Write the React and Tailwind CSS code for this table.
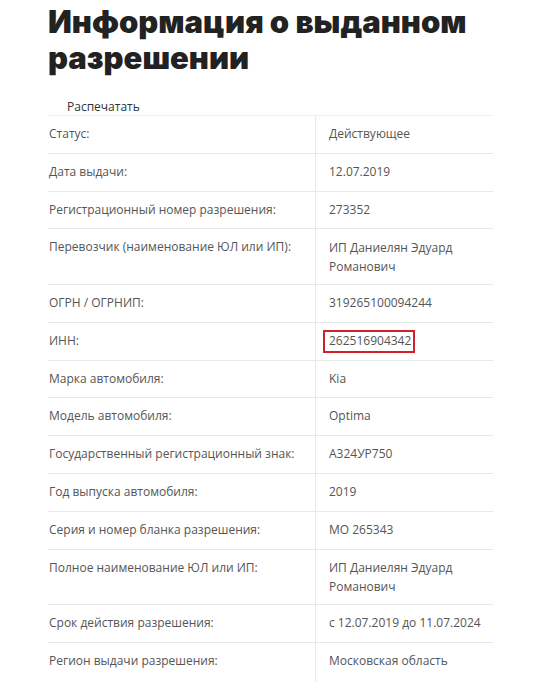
import React from "react";

const rows = [
  ["Статус:", "Действующее"],
  ["Дата выдачи:", "12.07.2019"],
  ["Регистрационный номер разрешения:", "273352"],
  ["Перевозчик (наименование ЮЛ или ИП):", "ИП Даниелян Эдуард Романович", false, true],
  ["ОГРН / ОГРНИП:", "319265100094244"],
  ["ИНН:", "262516904342", true],
  ["Марка автомобиля:", "Kia"],
  ["Модель автомобиля:", "Optima"],
  ["Государственный регистрационный знак:", "А324УР750"],
  ["Год выпуска автомобиля:", "2019"],
  ["Серия и номер бланка разрешения:", "МО 265343"],
  ["Полное наименование ЮЛ или ИП:", "ИП Даниелян Эдуард Романович", false, true],
  ["Срок действия разрешения:", "с 12.07.2019 до 11.07.2024"],
  ["Регион выдачи разрешения:", "Московская область"],
];

export default function App() {
  return (
    <div className="w-[540px] h-[682px] overflow-hidden bg-white">
      <div className="pl-[48px] pr-[47px]">
        <h1
          className="pt-[4px] text-[31px] leading-[36px] font-black text-[#222222]"
          style={{ fontFamily: "Inter, 'Noto Sans', sans-serif" }}
        >
          Информация о выданном
          <br />
          разрешении
        </h1>
        <div
          className="mt-[23px] pl-[19px] text-[12px] leading-[16px] text-[#333333]"
          style={{ fontFamily: "'Open Sans', sans-serif" }}
        >
          Распечатать
        </div>
        <div
          className="border-t border-[#eeeeee] text-[12px] text-[#555555]"
          style={{ fontFamily: "'Open Sans', sans-serif" }}
        >
          {rows.map(([label, value, boxed, twoLine], i) => (
            <div
              key={i}
              className={
                "grid grid-cols-[267px_179px] " +
                (i < rows.length - 1 ? "border-b border-[#e9e9e9]" : "")
              }
            >
              <div className="pl-[1px] py-[10px] leading-[16.8px]">{label}</div>
              <div
                className={
                  "border-l border-[#e9e9e9] pl-[13px] pr-[10px] " +
                  (twoLine ? "py-[8.3px] leading-[19px]" : "py-[10px] leading-[16.8px]")
                }
              >
                {boxed ? (
                  <span className="relative inline-block">
                    {value}
                    <span className="absolute left-[-6px] right-[-4px] top-[-3px] bottom-[-3px] border-2 border-[#d3202c]" />
                  </span>
                ) : (
                  value
                )}
              </div>
            </div>
          ))}
          <div className="grid grid-cols-[267px_179px] h-[60px]">
            <div />
            <div className="border-l border-[#e9e9e9]" />
          </div>
        </div>
      </div>
    </div>
  );
}
